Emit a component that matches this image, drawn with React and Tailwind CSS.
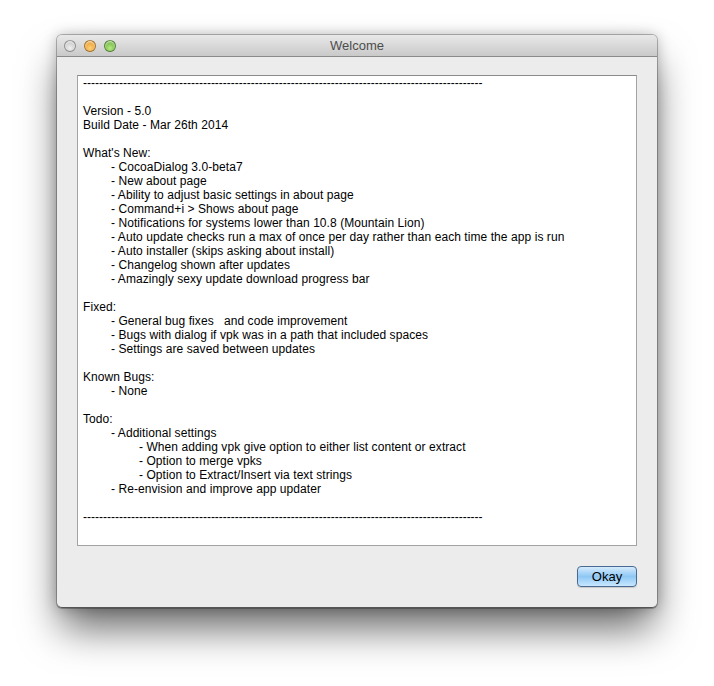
import React from 'react';

const DASHES = '-'.repeat(100);

const lines = [
  { t: DASHES, d: true },
  { t: '' },
  { t: 'Version - 5.0' },
  { t: 'Build Date - Mar 26th 2014' },
  { t: '' },
  { t: "What's New:" },
  { t: '- CocoaDialog 3.0-beta7', l: 1 },
  { t: '- New about page', l: 1 },
  { t: '- Ability to adjust basic settings in about page', l: 1 },
  { t: '- Command+i > Shows about page', l: 1 },
  { t: '- Notifications for systems lower than 10.8 (Mountain Lion)', l: 1 },
  { t: '- Auto update checks run a max of once per day rather than each time the app is run', l: 1 },
  { t: '- Auto installer (skips asking about install)', l: 1 },
  { t: '- Changelog shown after updates', l: 1 },
  { t: '- Amazingly sexy update download progress bar', l: 1 },
  { t: '' },
  { t: 'Fixed:' },
  { t: '- General bug fixes   and code improvement', l: 1 },
  { t: '- Bugs with dialog if vpk was in a path that included spaces', l: 1 },
  { t: '- Settings are saved between updates', l: 1 },
  { t: '' },
  { t: 'Known Bugs:' },
  { t: '- None', l: 1 },
  { t: '' },
  { t: 'Todo:' },
  { t: '- Additional settings', l: 1 },
  { t: '- When adding vpk give option to either list content or extract', l: 2 },
  { t: '- Option to merge vpks', l: 2 },
  { t: '- Option to Extract/Insert via text strings', l: 2 },
  { t: '- Re-envision and improve app updater', l: 1 },
  { t: '' },
  { t: DASHES, d: true },
];

const indent = ['pl-0', 'pl-[28px]', 'pl-[56px]'];

function Light({ className }) {
  return (
    <span
      className={`h-[12px] w-[12px] rounded-full border border-black/30 shadow-[inset_0_1px_2px_rgba(255,255,255,0.8)] ${className}`}
    />
  );
}

export default function App() {
  return (
    <div className="min-h-[686px] bg-white pl-[57px] pt-[35px] font-['Liberation_Sans',Arial,sans-serif]">
      <div className="flex h-[573px] w-[600px] flex-col rounded-[5px] border-b border-b-[#555] bg-[#ececec] shadow-[0_24px_40px_-4px_rgba(0,0,0,0.6),0_0_14px_rgba(0,0,0,0.25),0_0_0_1px_rgba(0,0,0,0.25)]">
        {/* title bar */}
        <div className="relative flex h-[22px] items-center rounded-t-[5px] border-b border-[#8a8a8a] bg-gradient-to-b from-[#e9e9e9] to-[#c9c9c9] px-[7px]">
          <div className="flex gap-[8px]">
            <Light className="bg-[radial-gradient(circle_at_50%_70%,#f2f2f2,#b5b5b5)]" />
            <Light className="bg-[radial-gradient(circle_at_50%_70%,#ffd07a,#e08a10)]" />
            <Light className="bg-[radial-gradient(circle_at_50%_70%,#b9ec86,#4d9e20)]" />
          </div>
          <div className="absolute inset-0 flex items-center justify-center text-[13px] text-[#4d4d4d]">
            Welcome
          </div>
        </div>

        {/* body */}
        <div className="flex flex-1 flex-col px-[20px] pt-[18px]">
          <div className="h-[471px] border border-[#a3a3a3] border-t-[#8a8a8a] bg-white pl-[5px] text-[12px] leading-[14px] text-black">
            {lines.map((ln, i) => (
              <div
                key={i}
                className={`h-[14px] whitespace-pre ${indent[ln.l || 0]} ${ln.d ? '' : 'tracking-[0.07px]'}`}
              >
                {ln.t}
              </div>
            ))}
          </div>
          <div className="flex justify-end pt-[20px]">
            <button className="h-[21px] w-[60px] rounded-[4px] border border-[#4a6a94] bg-gradient-to-b from-[#d5ebfc] via-[#8ec7f4] to-[#c8e8ff] text-[13px] leading-[19px] text-black shadow-[0_1px_1px_rgba(0,0,0,0.15)]">
              Okay
            </button>
          </div>
        </div>
      </div>
    </div>
  );
}
